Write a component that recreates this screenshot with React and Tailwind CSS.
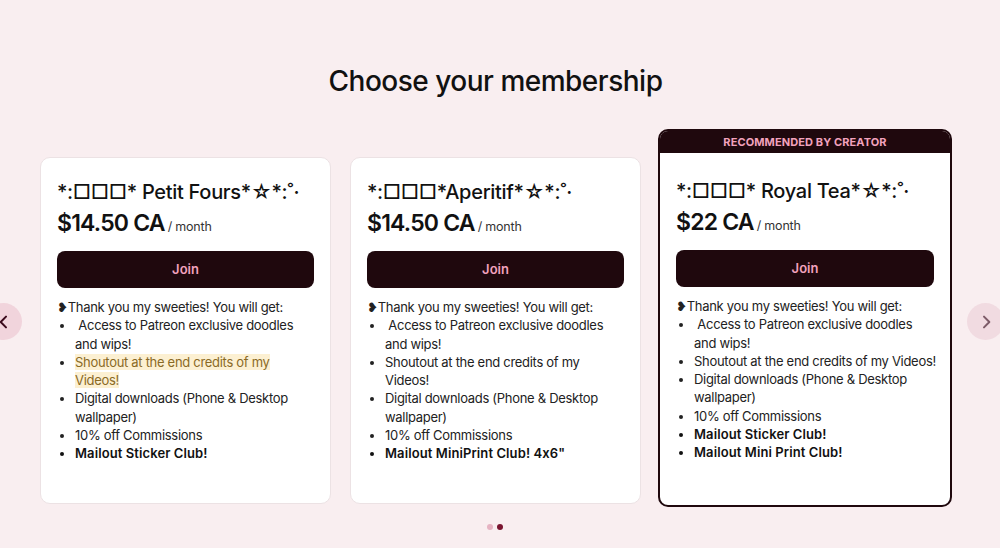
import React from 'react';

const NB = '\u00a0';

const tiers = [
  {
    name: '*:□□□* Petit Fours*☆*:˚·',
    price: '$14.50 CA',
    perks: [
      { text: NB + 'Access to Patreon exclusive doodles and wips!' },
      { text: 'Shoutout at the end credits of my Videos!', highlight: true },
      { text: 'Digital downloads (Phone & Desktop wallpaper)' },
      { text: '10% off Commissions' },
      { text: 'Mailout Sticker Club!', bold: true },
    ],
  },
  {
    name: '*:□□□*Aperitif*☆*:˚·',
    price: '$14.50 CA',
    perks: [
      { text: NB + 'Access to Patreon exclusive doodles and wips!' },
      { text: 'Shoutout at the end credits of my Videos!' },
      { text: 'Digital downloads (Phone & Desktop wallpaper)' },
      { text: '10% off Commissions' },
      { text: 'Mailout MiniPrint Club! 4x6"', bold: true },
    ],
  },
  {
    name: '*:□□□* Royal Tea*☆*:˚·',
    price: '$22 CA',
    perks: [
      { text: NB + 'Access to Patreon exclusive doodles and wips!' },
      { text: 'Shoutout at the end credits of my Videos!', nowrap: true },
      { text: 'Digital downloads (Phone & Desktop wallpaper)' },
      { text: '10% off Commissions' },
      { text: 'Mailout Sticker Club!', bold: true },
      { text: 'Mailout Mini Print Club!', bold: true },
    ],
  },
];

const TierBody = ({ tier, top }) => (
  <div className={top ? 'px-4 pt-[25px]' : 'px-4 pt-[21px]'}>
    <h3 className="text-[20px] leading-[26px] font-medium text-[#111] tracking-[-0.3px]">{tier.name}</h3>
    <div className="mt-[2px] flex items-baseline">
      <span className="text-[23px] leading-[32px] font-semibold text-[#111] tracking-[-0.8px]">{tier.price}</span>
      <span className="ml-[3px] text-[12.5px] text-[#333] tracking-[-0.2px]">/ month</span>
    </div>
    <button className="mt-[12px] h-[37px] w-full rounded-lg bg-[#1f080d] text-[13px] font-semibold text-[#f2a2bd]">
      Join
    </button>
    <div className="mt-[10px] text-[13px] leading-[18.25px] text-[#222] tracking-[-0.3px]">
      <p>❥Thank you my sweeties! You will get:</p>
      <ul className="list-disc pl-[18px]">
        {tier.perks.map((p, i) => (
          <li
            key={i}
            className={`${p.bold ? 'font-semibold text-[#111] tracking-[0.1px]' : ''} ${p.nowrap ? 'whitespace-nowrap' : ''}`}
          >
            {p.highlight ? (
              <span className="bg-[#fcf0d2] text-[#8a6a25] box-decoration-clone">{p.text}</span>
            ) : (
              p.text
            )}
          </li>
        ))}
      </ul>
    </div>
  </div>
);

export default function App() {
  return (
    <div
      className="relative h-[548px] w-[1000px] overflow-hidden bg-[#f9eef0] [font-feature-settings:'calt'_0]"
      style={{ fontFamily: 'Inter, "Noto Sans CJK JP", sans-serif' }}
    >
      <h1 className="pt-[61px] pr-[9px] text-center text-[28px] leading-[40px] font-medium text-[#111] tracking-[-0.5px]">
        Choose your membership
      </h1>

      <div className="mt-[28px] flex items-start gap-[19px] pl-[40px]">
        <div className="mt-[28px] h-[347px] w-[291px] rounded-[10px] border border-[#ece2e4] bg-white">
          <TierBody tier={tiers[0]} />
        </div>
        <div className="mt-[28px] h-[347px] w-[291px] rounded-[10px] border border-[#ece2e4] bg-white">
          <TierBody tier={tiers[1]} />
        </div>
        <div className="-ml-[2px] h-[378px] w-[294px] overflow-hidden rounded-[10px] border-2 border-[#1f080d] bg-white">
          <div className="flex h-[22px] items-center justify-center bg-[#1f080d] text-[11px] font-bold tracking-[0.1px] text-[#f2a2bd]">
            RECOMMENDED BY CREATOR
          </div>
          <TierBody tier={tiers[2]} top />
        </div>
      </div>

      <button className="absolute left-[-15px] top-[303px] flex h-[37px] w-[37px] items-center justify-center rounded-full bg-[#f1d4dc]">
        <svg width="16" height="16" viewBox="0 0 24 24" fill="none" stroke="#3b0a1c" strokeWidth="3" strokeLinecap="round" strokeLinejoin="round">
          <path d="M15 4l-8 8 8 8" />
        </svg>
      </button>
      <button className="absolute left-[967px] top-[303px] flex h-[37px] w-[37px] items-center justify-center rounded-full bg-[#f1dbe1]">
        <svg width="16" height="16" viewBox="0 0 24 24" fill="none" stroke="#7d5b68" strokeWidth="3" strokeLinecap="round" strokeLinejoin="round">
          <path d="M9 4l8 8-8 8" />
        </svg>
      </button>

      <div className="mt-[17px] flex justify-center gap-[4px] pr-[10px]">
        <span className="h-[6px] w-[6px] rounded-full bg-[#e6b3c2]" />
        <span className="h-[6px] w-[6px] rounded-full bg-[#7a1530]" />
      </div>
    </div>
  );
}
